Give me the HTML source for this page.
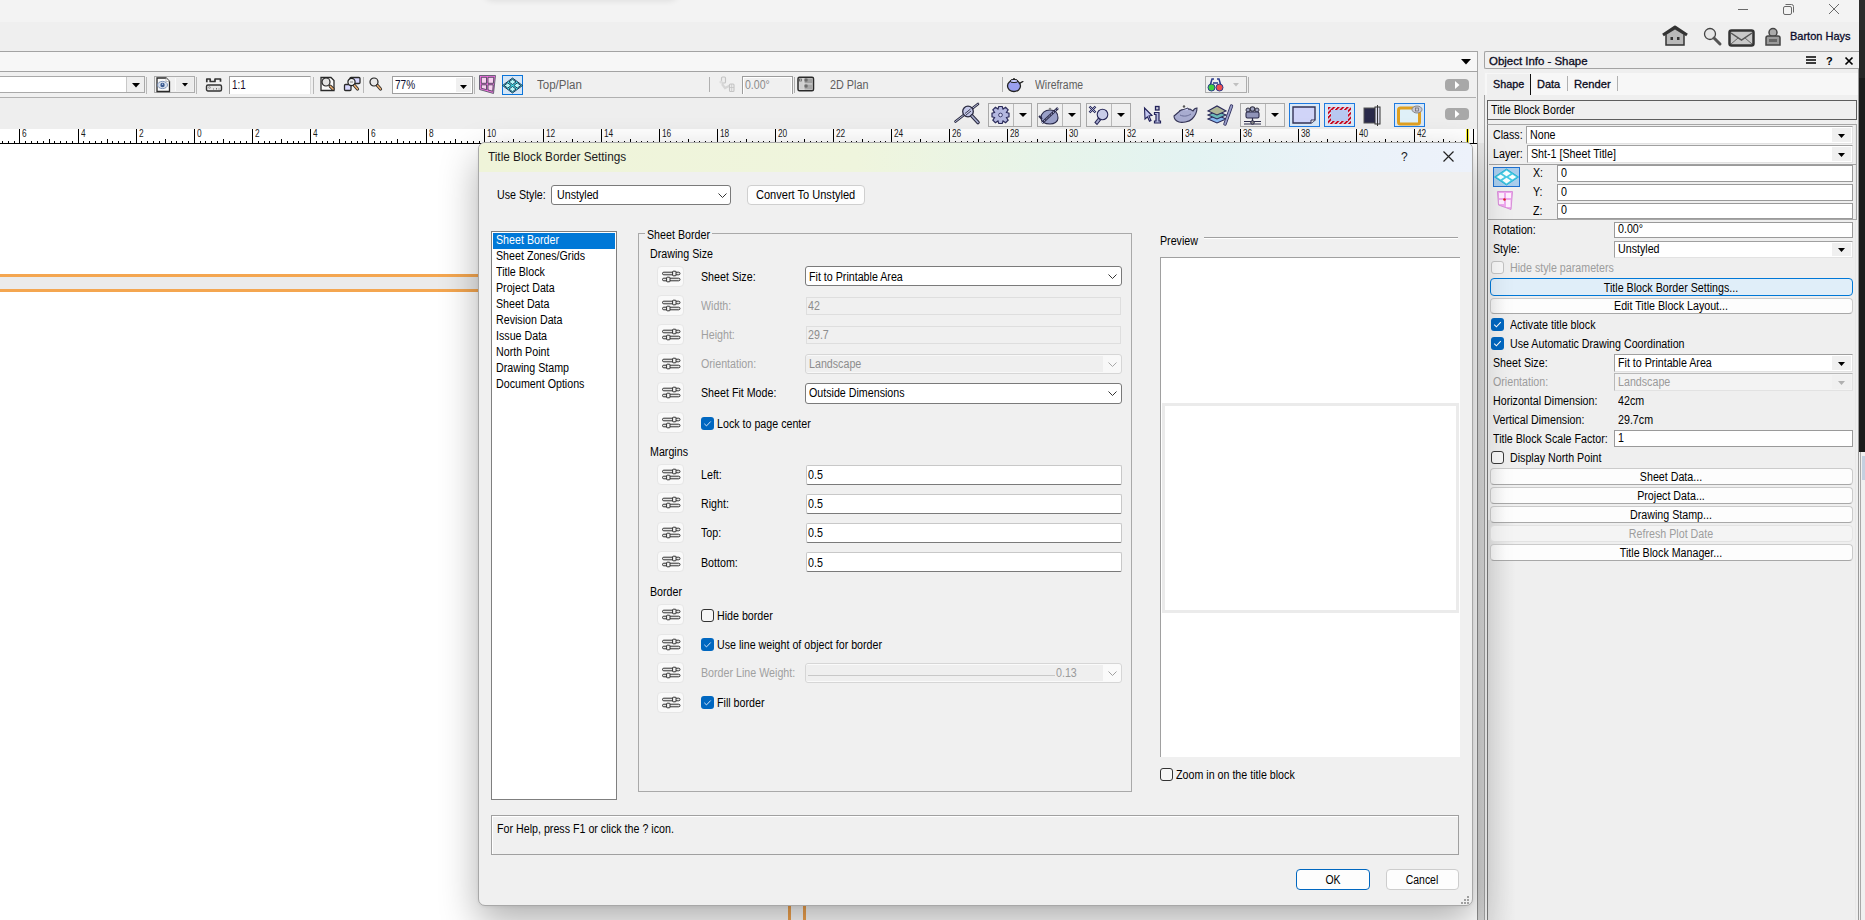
<!DOCTYPE html>
<html><head><meta charset="utf-8"><title>Title Block Border Settings</title>
<style>
html,body{margin:0;padding:0;}
body{width:1865px;height:920px;overflow:hidden;position:relative;background:#f0f0f0;font-family:"Liberation Sans",sans-serif;}
body div{position:absolute;box-sizing:border-box;}
.t{white-space:pre;}
svg{overflow:visible}
</style></head><body>
<div style="left:0px;top:0px;width:1865px;height:22px;background:#f3f3f3"></div>
<div style="left:0px;top:22px;width:1865px;height:29px;background:#efefef"></div>
<div style="left:482px;top:-30px;width:198px;height:30px;background:#f3f3f3;border-radius:0 0 12px 12px;box-shadow:0 1px 6px rgba(0,0,0,.09)"></div>
<div style="left:1738px;top:9px;width:10px;height:1px;background:#6a6a6a"></div>
<svg style="position:absolute;left:1782px;top:3px" width="14" height="14" viewBox="0 0 14 14"><rect x="1.5" y="3.5" width="8" height="8" rx="1.5" fill="none" stroke="#6a6a6a"/><path d="M3.5 1.5h6a2 2 0 0 1 2 2v6" fill="none" stroke="#6a6a6a"/></svg>
<svg style="position:absolute;left:1828px;top:3px" width="12" height="12" viewBox="0 0 12 12"><path d="M1 1L11 11M11 1L1 11" stroke="#6a6a6a" stroke-width="1"/></svg>
<div style="left:1859px;top:0px;width:6px;height:30px;background:#2c2c2c"></div>
<div style="left:1859px;top:30px;width:6px;height:48px;background:#262626"></div>
<div style="left:1859px;top:78px;width:6px;height:374px;background:#1b1b1b"></div>
<svg style="position:absolute;left:1661px;top:25px" width="28" height="22" viewBox="0 0 28 22"><path d="M2 10L14 2L26 10" fill="none" stroke="#333" stroke-width="3" stroke-linejoin="round"/><path d="M5 9L14 3.5L23 9V20H5Z" fill="#b9b9b9" stroke="#333" stroke-width="1.5"/><rect x="9.5" y="12" width="2.5" height="3" fill="#333"/><rect x="16" y="12" width="2.5" height="3" fill="#333"/></svg>
<svg style="position:absolute;left:1703px;top:27px" width="20" height="20" viewBox="0 0 20 20"><circle cx="7" cy="7" r="5.5" fill="#e6e6e6" stroke="#444" stroke-width="1.3"/><path d="M11 11L17 17" stroke="#555" stroke-width="3" stroke-linecap="round"/></svg>
<svg style="position:absolute;left:1728px;top:29px" width="28" height="19" viewBox="0 0 28 19"><rect x="1.5" y="1.5" width="24" height="15" rx="2" fill="#c8c8c8" stroke="#333" stroke-width="2.5"/><path d="M3 4L13.5 11L24 4" fill="none" stroke="#555" stroke-width="1.5"/><path d="M3 15L10 9M24 15L17 9" stroke="#666" stroke-width="1"/></svg>
<svg style="position:absolute;left:1764px;top:27px" width="18" height="20" viewBox="0 0 18 20"><circle cx="9" cy="5.5" r="4" fill="#aaa" stroke="#444" stroke-width="1.5"/><path d="M2 18V11a2 2 0 0 1 2-2h10a2 2 0 0 1 2 2v7Z" fill="#9a9a9a" stroke="#444" stroke-width="1.5"/><rect x="5" y="12" width="8" height="3" fill="#666"/></svg>
<div class="t" style="left:1790px;top:31px;font-size:11px;line-height:11px;color:#0a0a2a;transform:scaleX(1.0);transform-origin:0 0;-webkit-text-stroke:.3px #0a0a2a">Barton Hays</div>
<div style="left:0px;top:51px;width:1478px;height:1px;background:#a3a3a3"></div>
<div style="left:0px;top:52px;width:1477px;height:19px;background:#f7f7f7"></div>
<div style="left:1477px;top:51px;width:1px;height:92px;background:#a8a8a8"></div>
<svg style="position:absolute;left:1461px;top:59px" width="11" height="6" viewBox="0 0 11 6"><path d="M0 0H10L5 5.5Z" fill="#000"/></svg>
<div style="left:0px;top:71px;width:1478px;height:1px;background:#a3a3a3"></div>
<div style="left:0px;top:98px;width:1477px;height:31px;background:#eeeeee"></div>
<div style="left:0px;top:97px;width:1476px;height:1px;background:#b0b0b0"></div>
<div style="left:-2px;top:76px;width:147px;height:17px;background:#fff;border:1px solid #a9a9a9"></div>
<div style="left:126px;top:77px;width:18px;height:15px;background:#efefef;border-left:1px solid #c8c8c8"></div>
<svg style="position:absolute;left:132px;top:83px" width="8" height="5" viewBox="0 0 8 5"><path d="M0 0H8L4 4.5Z" fill="#000"/></svg>
<div style="left:146px;top:77px;width:1px;height:17px;background:#b8b8b8"></div>
<div style="left:154px;top:76px;width:41px;height:17px;background:#f0f0f0;border:1px solid #adadad"></div>
<div style="left:175px;top:78px;width:18px;height:13px;background:#ececec;border-left:1px solid #fafafa"></div>
<svg style="position:absolute;left:156px;top:77px" width="15" height="16" viewBox="0 0 15 16"><path d="M1 1H10L13.5 4.5V14.5H1Z" fill="#fafafa" stroke="#2a2a2a" stroke-width="1.3"/><path d="M10 1V4.5H13.5" fill="#fff" stroke="#999" stroke-width=".6"/><ellipse cx="6.5" cy="8" rx="5" ry="3.6" fill="#d8e0ec" stroke="#7088b0" stroke-width=".9"/><circle cx="6.5" cy="8" r="2.2" fill="#3a5a90"/><circle cx="6.5" cy="7.3" r=".7" fill="#c0d0f0"/></svg>
<svg style="position:absolute;left:182px;top:83px" width="6" height="4" viewBox="0 0 6 4"><path d="M0 0H6L3 3.5Z" fill="#000"/></svg>
<div style="left:196px;top:77px;width:1px;height:17px;background:#b8b8b8"></div>
<svg style="position:absolute;left:205px;top:77px" width="18" height="15" viewBox="0 0 18 15"><path d="M1.8 5.2V2H5.2V4.5H10V2H15.5V4.8" fill="none" stroke="#333" stroke-width="1.7" stroke-linejoin="round"/><rect x="1.5" y="8" width="15" height="6" rx="1.5" fill="#e6e6e6" stroke="#333" stroke-width="1.4"/><circle cx="4.5" cy="10.5" r=".9" fill="none" stroke="#888" stroke-width=".8"/><path d="M8.5 12.5v-1M11.5 12.5v-1.5M14 12.5v-1" stroke="#666" stroke-width=".9"/></svg>
<div style="left:229px;top:76px;width:82px;height:18px;background:#fff;border-left:1px solid #9c9c9c;border-top:1px solid #9c9c9c;border-right:1px solid #dadada"></div>
<div class="t" style="left:232px;top:79px;font-size:12px;line-height:12px;color:#1a0a2a;transform:scaleX(0.82);transform-origin:0 0;">1:1</div>
<div style="left:313px;top:77px;width:1px;height:17px;background:#b8b8b8"></div>
<svg style="position:absolute;left:319px;top:75px" width="20" height="18" viewBox="0 0 20 18"><path d="M2 2.5H12L15 5.5V15.5H2Z" fill="#fafafa" stroke="#2a2a2a" stroke-width="1.3"/><circle cx="7" cy="7" r="4" fill="#e4e4e4" stroke="#222" stroke-width="1.2"/><path d="M11.2 11.2L14 14" stroke="#2a2a2a" stroke-width="3.2" stroke-linecap="round"/><path d="M11.2 11.2L14 14" stroke="#f0b070" stroke-width="1.5" stroke-linecap="round"/></svg>
<svg style="position:absolute;left:342px;top:75px" width="20" height="18" viewBox="0 0 20 18"><rect x="2.5" y="9.5" width="6.5" height="6" rx="1" fill="#d8d8ff" stroke="#2a2a2a" stroke-width="1.3"/><rect x="8" y="2.5" width="10" height="6" rx="1" fill="#d8d8ff" stroke="#2a2a2a" stroke-width="1.3"/><circle cx="9.5" cy="7" r="3.6" fill="#eee" stroke="#222" stroke-width="1.2"/><path d="M8 7H11" stroke="#666" stroke-width=".8"/><path d="M12.5 10.5L15.5 14" stroke="#2a2a2a" stroke-width="3.2" stroke-linecap="round"/><path d="M12.5 10.5L15.5 14" stroke="#f0b070" stroke-width="1.5" stroke-linecap="round"/></svg>
<div style="left:363px;top:77px;width:1px;height:16px;background:#b8b8b8"></div>
<svg style="position:absolute;left:368px;top:75px" width="20" height="18" viewBox="0 0 20 18"><circle cx="6" cy="7" r="4" fill="#e8e8e8" stroke="#222" stroke-width="1.2"/><path d="M9.5 10.5L12.5 14" stroke="#2a2a2a" stroke-width="3.2" stroke-linecap="round"/><path d="M9.5 10.5L12.5 14" stroke="#f0b070" stroke-width="1.5" stroke-linecap="round"/></svg>
<div style="left:392px;top:76px;width:81px;height:18px;background:#fff;border:1px solid #a0a0a0"></div>
<div style="left:456px;top:78px;width:15px;height:14px;background:#f0f0f0"></div>
<svg style="position:absolute;left:460px;top:85px" width="7" height="4" viewBox="0 0 7 4"><path d="M0 0H7L3.5 4Z" fill="#000"/></svg>
<div class="t" style="left:395px;top:79px;font-size:12px;line-height:12px;color:#101030;transform:scaleX(0.84);transform-origin:0 0;">77%</div>
<div style="left:474px;top:77px;width:1px;height:17px;background:#b8b8b8"></div>
<svg style="position:absolute;left:478px;top:74px" width="19" height="21" viewBox="0 0 19 21"><path d="M1.5 1.5H17.5L15.5 19.5L1.5 15.5Z" fill="#f070e0" stroke="#5a5a6a" stroke-width=".9"/><path d="M3.3 3.3H8.5V9.3H3.3Z M10 3.3H15.8L15.4 9.3H10Z M3.3 10.8H8.5V15.6L3.3 14.3Z M10 10.8H15.2L14.7 17.2L10 16Z" fill="#f8d0f0" stroke="#3a3a4a" stroke-width=".8"/></svg>
<div style="left:502px;top:75px;width:21px;height:20px;background:#d4e6f7;border:1.5px solid #0a74da"></div>
<svg style="position:absolute;left:502px;top:77px" width="21" height="17" viewBox="0 0 21 17"><path d="M10.5 1L20.5 8.5L10.5 16L0.5 8.5Z" fill="#40eef0" stroke="#1a2a4a" stroke-width=".9"/><path d="M10.5 2.3L14.0 4.9L10.5 7.5L7.0 4.9Z" fill="#b8f8f8" stroke="#1a2a4a" stroke-width=".9"/><path d="M15.3 5.9L18.8 8.5L15.3 11.1L11.8 8.5Z" fill="#b8f8f8" stroke="#1a2a4a" stroke-width=".9"/><path d="M10.5 9.5L14.0 12.1L10.5 14.7L7.0 12.1Z" fill="#b8f8f8" stroke="#1a2a4a" stroke-width=".9"/><path d="M5.7 5.9L9.2 8.5L5.7 11.1L2.2 8.5Z" fill="#b8f8f8" stroke="#1a2a4a" stroke-width=".9"/></svg>
<div class="t" style="left:537px;top:79px;font-size:12px;line-height:12px;color:#5e5e5e;transform:scaleX(0.96);transform-origin:0 0;">Top/Plan</div>
<div style="left:709px;top:77px;width:1px;height:15px;background:#b0b0b0"></div>
<svg style="position:absolute;left:718px;top:76px" width="18" height="17" viewBox="0 0 18 17"><path d="M4 8L7 12L13 9" fill="none" stroke="#d6d6d6" stroke-width="2.2"/><rect x="3.5" y="1" width="4" height="6" rx="1" fill="#eee" stroke="#c4c4c4" stroke-width="1.1"/><rect x="11.5" y="8" width="4.5" height="7.5" rx="1" fill="#eee" stroke="#c4c4c4" stroke-width="1.1"/><path d="M11.5 11.5H16M13.7 8V15.5" stroke="#c4c4c4" stroke-width=".8"/><circle cx="3" cy="6" r="1.6" fill="#ddd"/></svg>
<div style="left:742px;top:76px;width:51px;height:18px;background:#f0f0f0;border-left:1px solid #9c9c9c;border-top:1px solid #9c9c9c;border-right:1px solid #9c9c9c;box-shadow:inset 1px 1px 0 #fff,inset -1px 0 0 #fff"></div>
<div class="t" style="left:745px;top:79px;font-size:12px;line-height:12px;color:#8a8a8a;transform:scaleX(0.88);transform-origin:0 0;">0.00°</div>
<div style="left:794px;top:77px;width:1px;height:16px;background:#b0b0b0"></div>
<svg style="position:absolute;left:797px;top:76px" width="18" height="16" viewBox="0 0 18 16"><rect x="1" y="1.2" width="15.5" height="13.5" rx="1.5" fill="#ddd" stroke="#2a2a2a" stroke-width="1.5"/><rect x="2.2" y="2.4" width="4.5" height="11" fill="#cfcfcf"/><rect x="7.5" y="2.4" width="8" height="5" fill="#a0a0a0"/><rect x="7.5" y="8.4" width="8" height="5.2" fill="#a8a8a8"/><rect x="2.5" y="3" width="2" height="2" fill="none" stroke="#555" stroke-width=".7"/><rect x="8" y="3" width="2" height="2" fill="none" stroke="#444" stroke-width=".7"/><rect x="8" y="9" width="2" height="2" fill="none" stroke="#444" stroke-width=".7"/></svg>
<div class="t" style="left:830px;top:79px;font-size:12px;line-height:12px;color:#5e5e5e;transform:scaleX(0.9);transform-origin:0 0;">2D Plan</div>
<div style="left:1002px;top:77px;width:1px;height:15px;background:#b0b0b0"></div>
<svg style="position:absolute;left:1006px;top:76px" width="18" height="17" viewBox="0 0 18 17"><ellipse cx="8" cy="10" rx="6.5" ry="5.5" fill="#9aa0f0" stroke="#222" stroke-width="1.3"/><path d="M13 8C15 6 17 6 17 5" fill="none" stroke="#222" stroke-width="1.3"/><ellipse cx="8" cy="5" rx="4" ry="1.6" fill="#c8ccff" stroke="#222"/><circle cx="8" cy="3" r="1" fill="#222"/></svg>
<div class="t" style="left:1035px;top:79px;font-size:12px;line-height:12px;color:#5e5e5e;transform:scaleX(0.87);transform-origin:0 0;">Wireframe</div>
<div style="left:1205px;top:76px;width:42px;height:17px;background:#f0f0f0;border:1px solid #adadad"></div>
<svg style="position:absolute;left:1207px;top:77px" width="17" height="15" viewBox="0 0 17 15"><path d="M3 9L5 2L7 2M14 9L12 2L10 2M6 6H11" fill="none" stroke="#2a3a8a" stroke-width="1.5"/><circle cx="4.5" cy="10.5" r="3.5" fill="#40d040" stroke="#2a3a8a"/><circle cx="12.5" cy="10.5" r="3.5" fill="#f05050" stroke="#2a3a8a"/></svg>
<svg style="position:absolute;left:1233px;top:83px" width="6" height="4" viewBox="0 0 6 4"><path d="M0 0H6L3 3.5Z" fill="#c0c0c0"/></svg>
<div style="left:1248px;top:77px;width:1px;height:16px;background:#b0b0b0"></div>
<div style="left:1445px;top:79px;width:24px;height:12px;background:#a8a8a8;border-radius:4px"></div>
<svg style="position:absolute;left:1455px;top:81px" width="5" height="8" viewBox="0 0 5 8"><path d="M0 0L4.5 4L0 8Z" fill="#fff"/></svg>
<svg style="position:absolute;left:954px;top:103px" width="28" height="24" viewBox="0 0 28 24"><path d="M1.5 18.5L24 1" stroke="#2a2a40" stroke-width="2.6" stroke-linecap="round"/><path d="M1.5 18.5L24 1" stroke="#b8bcd8" stroke-width="1" stroke-linecap="round"/><circle cx="14" cy="8.5" r="5.3" fill="#c4c8e8" stroke="#2a2a40" stroke-width="1.3"/><path d="M11 10.5L16.5 6M12 12L17 8" stroke="#2a2a40" stroke-width=".9"/><path d="M18 13L24 19.5" stroke="#2a2a40" stroke-width="3.6" stroke-linecap="round"/><path d="M18 13L24 19.5" stroke="#aab0d0" stroke-width="1.6" stroke-linecap="round"/></svg>
<div style="left:988px;top:103px;width:44px;height:24px;background:#f0f0f0;border:1px solid #a9a9a9"></div>
<div style="left:1013px;top:104px;width:1px;height:22px;background:#b9b9b9"></div>
<svg style="position:absolute;left:1019px;top:113px" width="8" height="4" viewBox="0 0 8 4"><path d="M0 0H8L4 4Z" fill="#000"/></svg>
<svg style="position:absolute;left:989px;top:104px" width="24" height="23" viewBox="0 0 24 23"><g transform="translate(11.5,11) scale(.85)"><path d="M-2-10h4l1 3 3-2 3 3-2 3 3 1v4l-3 1 2 3-3 3-3-2-1 3h-4l-1-3-3 2-3-3 2-3-3-1v-4l3-1-2-3 3-3 3 2z" fill="#b4b8e0" stroke="#2a2a5a" stroke-width="1.4"/><circle r="2.2" fill="#d8dcf8" stroke="#2a2a5a" stroke-width="1"/></g></svg>
<div style="left:1037px;top:103px;width:44px;height:24px;background:#f0f0f0;border:1px solid #a9a9a9"></div>
<div style="left:1062px;top:104px;width:1px;height:22px;background:#b9b9b9"></div>
<svg style="position:absolute;left:1068px;top:113px" width="8" height="4" viewBox="0 0 8 4"><path d="M0 0H8L4 4Z" fill="#000"/></svg>
<svg style="position:absolute;left:1038px;top:104px" width="24" height="23" viewBox="0 0 24 23"><path d="M3 14C3 9 7 6 12 6C17 6 20 9 20 14C20 18 16 20 12 20C7 20 3 18 3 14Z" fill="#9aa0c8" stroke="#2a2a4a" stroke-width="1.1"/><path d="M1 12L4 15" stroke="#2a2a4a" stroke-width="2"/><path d="M4 19L20 4" stroke="#2a2a4a" stroke-width="2.4"/><path d="M4 19L20 4" stroke="#c8ccf0" stroke-width="1" stroke-dasharray="1.5 1.5"/><circle cx="12" cy="5" r="1.3" fill="#888"/></svg>
<div style="left:1086px;top:103px;width:45px;height:24px;background:#f0f0f0;border:1px solid #a9a9a9"></div>
<div style="left:1111px;top:104px;width:1px;height:22px;background:#b9b9b9"></div>
<svg style="position:absolute;left:1117px;top:113px" width="8" height="4" viewBox="0 0 8 4"><path d="M0 0H8L4 4Z" fill="#000"/></svg>
<svg style="position:absolute;left:1087px;top:104px" width="24" height="23" viewBox="0 0 24 23"><circle cx="15.5" cy="10.5" r="5.3" fill="#c8cce8" stroke="#2a2a5a" stroke-width="1.1"/><path d="M11.5 14L8 18.5L10 20.5L13.5 16Z" fill="#a8acd0" stroke="#2a2a5a" stroke-width="1.1"/><path d="M2.5 2.5L8.5 8.5M8.5 2.5L2.5 8.5" stroke="#2a2a5a" stroke-width="2.4"/><path d="M2.5 2.5L8.5 8.5M8.5 2.5L2.5 8.5" stroke="#b0b4d8" stroke-width=".9"/></svg>
<svg style="position:absolute;left:1142px;top:104px" width="22" height="22" viewBox="0 0 22 22"><path d="M2.5 4L10 11.5L7 12L9 16.5L7.5 17.2L5.5 12.8L3 15Z" fill="#c4c8f0" stroke="#23235a" stroke-width="1.1"/><rect x="13.5" y="2.5" width="3.5" height="3.5" fill="#ccd" stroke="#23235a" stroke-width="1.3"/><path d="M12.5 8.5H17V17H18.5V19H12.5V17H14V10.5H12.5Z" fill="#b8bce0" stroke="#23235a" stroke-width="1.2"/></svg>
<svg style="position:absolute;left:1172px;top:103px" width="27" height="22" viewBox="0 0 27 22"><path d="M2 13L9 7L18 6L21 8C22 6 24 5 25 5C25 9 23 13 20 16C17 19 10 20 7 19C4 18 2 16 2 13Z" fill="#a8acd0" stroke="#333355" stroke-width="1.1"/><path d="M7 8L16 5L17 7" fill="#c8ccf0" stroke="#333355" stroke-width=".9"/><circle cx="12" cy="3.5" r="1.2" fill="#555"/><path d="M8 12C12 14 16 13 19 11" fill="none" stroke="#6a6e98" stroke-width="1"/></svg>
<svg style="position:absolute;left:1206px;top:103px" width="28" height="24" viewBox="0 0 28 24"><path d="M2 16L11 12L20 16L11 20Z" fill="#88b8f0" stroke="#2a2a5a" stroke-width="1.1"/><path d="M2 12L11 8L20 12L11 16Z" fill="#68b8b8" stroke="#2a2a5a" stroke-width="1.1"/><path d="M2 8L11 3L20 8L11 12Z" fill="#b0b898" stroke="#2a2a5a" stroke-width="1.1"/><path d="M19 21L25.5 3" stroke="#2a2a5a" stroke-width="3.4" stroke-linecap="round"/><path d="M19 21L25.5 3" stroke="#9a9ec8" stroke-width="1.8" stroke-linecap="round"/></svg>
<div style="left:1240px;top:103px;width:45px;height:24px;background:#f0f0f0;border:1px solid #a9a9a9"></div>
<div style="left:1265px;top:104px;width:1px;height:22px;background:#b9b9b9"></div>
<svg style="position:absolute;left:1271px;top:113px" width="8" height="4" viewBox="0 0 8 4"><path d="M0 0H8L4 4Z" fill="#000"/></svg>
<svg style="position:absolute;left:1241px;top:104px" width="24" height="23" viewBox="0 0 24 23"><circle cx="11.5" cy="5" r="2.3" fill="#a0a4c0" stroke="#334" stroke-width="1.1"/><circle cx="7" cy="6" r="2" fill="#a0a4c0" stroke="#334"/><circle cx="16" cy="6" r="2" fill="#a0a4c0" stroke="#334"/><rect x="5" y="8" width="13" height="6" rx="1.5" fill="#9094b8" stroke="#2a2a4a" stroke-width="1.1"/><path d="M11.5 14V18M3 17.5H20M3 20H20" stroke="#2a2a4a" stroke-width="1.2"/><circle cx="11.5" cy="18.5" r="1.8" fill="#888" stroke="#2a2a4a"/></svg>
<div style="left:1289px;top:103px;width:31px;height:24px;background:#d8e8f8;border:1px solid #1e7ae0"></div>
<svg style="position:absolute;left:1291px;top:105px" width="27" height="20" viewBox="0 0 27 20"><path d="M2 2H24V15L20 18H2Z" fill="#d0d4f8" stroke="#333355" stroke-width="1.4"/><path d="M20 18V15H24" fill="#fff" stroke="#333355"/></svg>
<div style="left:1324px;top:103px;width:31px;height:24px;background:#d8e8f8;border:1px solid #1e7ae0"></div>
<svg style="position:absolute;left:1326px;top:105px" width="27" height="20" viewBox="0 0 27 20"><defs><pattern id="hp" width="3.2" height="3.2" patternUnits="userSpaceOnUse" patternTransform="rotate(45)"><rect width="1.8" height="3.2" fill="#c8001a"/></pattern></defs><rect x="2" y="2" width="23" height="17" fill="url(#hp)"/><rect x="5" y="5" width="17" height="11" fill="#b8c8f0"/></svg>
<svg style="position:absolute;left:1363px;top:104px" width="20" height="22" viewBox="0 0 20 22"><rect x="1" y="4" width="12" height="15" fill="#2a2a4a" stroke="#555" stroke-width="1"/><rect x="12" y="3" width="5" height="17" fill="#dde" stroke="#333"/><path d="M14.5 1V22" stroke="#333" stroke-width="1"/></svg>
<div style="left:1394px;top:103px;width:31px;height:24px;background:#d8e8f8;border:1px solid #1e7ae0"></div>
<svg style="position:absolute;left:1396px;top:105px" width="27" height="21" viewBox="0 0 27 21"><rect x="2.5" y="3" width="21" height="16" rx="2" fill="#dff0f8" stroke="#e0a020" stroke-width="3"/><ellipse cx="21" cy="4.5" rx="5" ry="3.5" fill="#c8c8d8" stroke="#888"/><rect x="19.5" y="3" width="3" height="3" fill="none" stroke="#666" stroke-width=".7"/></svg>
<div style="left:1445px;top:108px;width:24px;height:12px;background:#a8a8a8;border-radius:4px"></div>
<svg style="position:absolute;left:1455px;top:110px" width="5" height="8" viewBox="0 0 5 8"><path d="M0 0L4.5 4L0 8Z" fill="#fff"/></svg>
<div style="left:0px;top:129px;width:1477px;height:14px;background:#fff"></div>
<div style="left:0px;top:143px;width:1477px;height:1px;background:#000"></div>
<div class="t" style="left:22px;top:129px;font-size:10px;line-height:10px;color:#1a1a1a;transform:scaleX(0.83);transform-origin:0 0;">6</div>
<div class="t" style="left:81px;top:129px;font-size:10px;line-height:10px;color:#1a1a1a;transform:scaleX(0.83);transform-origin:0 0;">4</div>
<div class="t" style="left:139px;top:129px;font-size:10px;line-height:10px;color:#1a1a1a;transform:scaleX(0.83);transform-origin:0 0;">2</div>
<div class="t" style="left:197px;top:129px;font-size:10px;line-height:10px;color:#1a1a1a;transform:scaleX(0.83);transform-origin:0 0;">0</div>
<div class="t" style="left:255px;top:129px;font-size:10px;line-height:10px;color:#1a1a1a;transform:scaleX(0.83);transform-origin:0 0;">2</div>
<div class="t" style="left:313px;top:129px;font-size:10px;line-height:10px;color:#1a1a1a;transform:scaleX(0.83);transform-origin:0 0;">4</div>
<div class="t" style="left:371px;top:129px;font-size:10px;line-height:10px;color:#1a1a1a;transform:scaleX(0.83);transform-origin:0 0;">6</div>
<div class="t" style="left:429px;top:129px;font-size:10px;line-height:10px;color:#1a1a1a;transform:scaleX(0.83);transform-origin:0 0;">8</div>
<div class="t" style="left:487px;top:129px;font-size:10px;line-height:10px;color:#1a1a1a;transform:scaleX(0.83);transform-origin:0 0;">10</div>
<div class="t" style="left:546px;top:129px;font-size:10px;line-height:10px;color:#1a1a1a;transform:scaleX(0.83);transform-origin:0 0;">12</div>
<div class="t" style="left:604px;top:129px;font-size:10px;line-height:10px;color:#1a1a1a;transform:scaleX(0.83);transform-origin:0 0;">14</div>
<div class="t" style="left:662px;top:129px;font-size:10px;line-height:10px;color:#1a1a1a;transform:scaleX(0.83);transform-origin:0 0;">16</div>
<div class="t" style="left:720px;top:129px;font-size:10px;line-height:10px;color:#1a1a1a;transform:scaleX(0.83);transform-origin:0 0;">18</div>
<div class="t" style="left:778px;top:129px;font-size:10px;line-height:10px;color:#1a1a1a;transform:scaleX(0.83);transform-origin:0 0;">20</div>
<div class="t" style="left:836px;top:129px;font-size:10px;line-height:10px;color:#1a1a1a;transform:scaleX(0.83);transform-origin:0 0;">22</div>
<div class="t" style="left:894px;top:129px;font-size:10px;line-height:10px;color:#1a1a1a;transform:scaleX(0.83);transform-origin:0 0;">24</div>
<div class="t" style="left:952px;top:129px;font-size:10px;line-height:10px;color:#1a1a1a;transform:scaleX(0.83);transform-origin:0 0;">26</div>
<div class="t" style="left:1010px;top:129px;font-size:10px;line-height:10px;color:#1a1a1a;transform:scaleX(0.83);transform-origin:0 0;">28</div>
<div class="t" style="left:1069px;top:129px;font-size:10px;line-height:10px;color:#1a1a1a;transform:scaleX(0.83);transform-origin:0 0;">30</div>
<div class="t" style="left:1127px;top:129px;font-size:10px;line-height:10px;color:#1a1a1a;transform:scaleX(0.83);transform-origin:0 0;">32</div>
<div class="t" style="left:1185px;top:129px;font-size:10px;line-height:10px;color:#1a1a1a;transform:scaleX(0.83);transform-origin:0 0;">34</div>
<div class="t" style="left:1243px;top:129px;font-size:10px;line-height:10px;color:#1a1a1a;transform:scaleX(0.83);transform-origin:0 0;">36</div>
<div class="t" style="left:1301px;top:129px;font-size:10px;line-height:10px;color:#1a1a1a;transform:scaleX(0.83);transform-origin:0 0;">38</div>
<div class="t" style="left:1359px;top:129px;font-size:10px;line-height:10px;color:#1a1a1a;transform:scaleX(0.83);transform-origin:0 0;">40</div>
<div class="t" style="left:1417px;top:129px;font-size:10px;line-height:10px;color:#1a1a1a;transform:scaleX(0.83);transform-origin:0 0;">42</div>
<svg style="position:absolute;left:0px;top:129px" width="1477" height="15" viewBox="0 0 1477 15"><rect x="2" y="12" width="1" height="2" fill="#000"/><rect x="8" y="12" width="1" height="2" fill="#000"/><rect x="14" y="12" width="1" height="2" fill="#000"/><rect x="19" y="0" width="1" height="14" fill="#000"/><rect x="25" y="12" width="1" height="2" fill="#000"/><rect x="31" y="12" width="1" height="2" fill="#000"/><rect x="37" y="12" width="1" height="2" fill="#000"/><rect x="43" y="12" width="1" height="2" fill="#000"/><rect x="49" y="10" width="1" height="4" fill="#000"/><rect x="54" y="12" width="1" height="2" fill="#000"/><rect x="60" y="12" width="1" height="2" fill="#000"/><rect x="66" y="12" width="1" height="2" fill="#000"/><rect x="72" y="12" width="1" height="2" fill="#000"/><rect x="78" y="0" width="1" height="14" fill="#000"/><rect x="83" y="12" width="1" height="2" fill="#000"/><rect x="89" y="12" width="1" height="2" fill="#000"/><rect x="95" y="12" width="1" height="2" fill="#000"/><rect x="101" y="12" width="1" height="2" fill="#000"/><rect x="107" y="10" width="1" height="4" fill="#000"/><rect x="112" y="12" width="1" height="2" fill="#000"/><rect x="118" y="12" width="1" height="2" fill="#000"/><rect x="124" y="12" width="1" height="2" fill="#000"/><rect x="130" y="12" width="1" height="2" fill="#000"/><rect x="136" y="0" width="1" height="14" fill="#000"/><rect x="141" y="12" width="1" height="2" fill="#000"/><rect x="147" y="12" width="1" height="2" fill="#000"/><rect x="153" y="12" width="1" height="2" fill="#000"/><rect x="159" y="12" width="1" height="2" fill="#000"/><rect x="165" y="10" width="1" height="4" fill="#000"/><rect x="171" y="12" width="1" height="2" fill="#000"/><rect x="176" y="12" width="1" height="2" fill="#000"/><rect x="182" y="12" width="1" height="2" fill="#000"/><rect x="188" y="12" width="1" height="2" fill="#000"/><rect x="194" y="0" width="1" height="14" fill="#000"/><rect x="200" y="12" width="1" height="2" fill="#000"/><rect x="205" y="12" width="1" height="2" fill="#000"/><rect x="211" y="12" width="1" height="2" fill="#000"/><rect x="217" y="12" width="1" height="2" fill="#000"/><rect x="223" y="10" width="1" height="4" fill="#000"/><rect x="229" y="12" width="1" height="2" fill="#000"/><rect x="234" y="12" width="1" height="2" fill="#000"/><rect x="240" y="12" width="1" height="2" fill="#000"/><rect x="246" y="12" width="1" height="2" fill="#000"/><rect x="252" y="0" width="1" height="14" fill="#000"/><rect x="258" y="12" width="1" height="2" fill="#000"/><rect x="264" y="12" width="1" height="2" fill="#000"/><rect x="269" y="12" width="1" height="2" fill="#000"/><rect x="275" y="12" width="1" height="2" fill="#000"/><rect x="281" y="10" width="1" height="4" fill="#000"/><rect x="287" y="12" width="1" height="2" fill="#000"/><rect x="293" y="12" width="1" height="2" fill="#000"/><rect x="298" y="12" width="1" height="2" fill="#000"/><rect x="304" y="12" width="1" height="2" fill="#000"/><rect x="310" y="0" width="1" height="14" fill="#000"/><rect x="316" y="12" width="1" height="2" fill="#000"/><rect x="322" y="12" width="1" height="2" fill="#000"/><rect x="327" y="12" width="1" height="2" fill="#000"/><rect x="333" y="12" width="1" height="2" fill="#000"/><rect x="339" y="10" width="1" height="4" fill="#000"/><rect x="345" y="12" width="1" height="2" fill="#000"/><rect x="351" y="12" width="1" height="2" fill="#000"/><rect x="357" y="12" width="1" height="2" fill="#000"/><rect x="362" y="12" width="1" height="2" fill="#000"/><rect x="368" y="0" width="1" height="14" fill="#000"/><rect x="374" y="12" width="1" height="2" fill="#000"/><rect x="380" y="12" width="1" height="2" fill="#000"/><rect x="386" y="12" width="1" height="2" fill="#000"/><rect x="391" y="12" width="1" height="2" fill="#000"/><rect x="397" y="10" width="1" height="4" fill="#000"/><rect x="403" y="12" width="1" height="2" fill="#000"/><rect x="409" y="12" width="1" height="2" fill="#000"/><rect x="415" y="12" width="1" height="2" fill="#000"/><rect x="420" y="12" width="1" height="2" fill="#000"/><rect x="426" y="0" width="1" height="14" fill="#000"/><rect x="432" y="12" width="1" height="2" fill="#000"/><rect x="438" y="12" width="1" height="2" fill="#000"/><rect x="444" y="12" width="1" height="2" fill="#000"/><rect x="450" y="12" width="1" height="2" fill="#000"/><rect x="455" y="10" width="1" height="4" fill="#000"/><rect x="461" y="12" width="1" height="2" fill="#000"/><rect x="467" y="12" width="1" height="2" fill="#000"/><rect x="473" y="12" width="1" height="2" fill="#000"/><rect x="479" y="12" width="1" height="2" fill="#000"/><rect x="484" y="0" width="1" height="14" fill="#000"/><rect x="490" y="12" width="1" height="2" fill="#000"/><rect x="496" y="12" width="1" height="2" fill="#000"/><rect x="502" y="12" width="1" height="2" fill="#000"/><rect x="508" y="12" width="1" height="2" fill="#000"/><rect x="513" y="10" width="1" height="4" fill="#000"/><rect x="519" y="12" width="1" height="2" fill="#000"/><rect x="525" y="12" width="1" height="2" fill="#000"/><rect x="531" y="12" width="1" height="2" fill="#000"/><rect x="537" y="12" width="1" height="2" fill="#000"/><rect x="543" y="0" width="1" height="14" fill="#000"/><rect x="548" y="12" width="1" height="2" fill="#000"/><rect x="554" y="12" width="1" height="2" fill="#000"/><rect x="560" y="12" width="1" height="2" fill="#000"/><rect x="566" y="12" width="1" height="2" fill="#000"/><rect x="572" y="10" width="1" height="4" fill="#000"/><rect x="577" y="12" width="1" height="2" fill="#000"/><rect x="583" y="12" width="1" height="2" fill="#000"/><rect x="589" y="12" width="1" height="2" fill="#000"/><rect x="595" y="12" width="1" height="2" fill="#000"/><rect x="601" y="0" width="1" height="14" fill="#000"/><rect x="606" y="12" width="1" height="2" fill="#000"/><rect x="612" y="12" width="1" height="2" fill="#000"/><rect x="618" y="12" width="1" height="2" fill="#000"/><rect x="624" y="12" width="1" height="2" fill="#000"/><rect x="630" y="10" width="1" height="4" fill="#000"/><rect x="636" y="12" width="1" height="2" fill="#000"/><rect x="641" y="12" width="1" height="2" fill="#000"/><rect x="647" y="12" width="1" height="2" fill="#000"/><rect x="653" y="12" width="1" height="2" fill="#000"/><rect x="659" y="0" width="1" height="14" fill="#000"/><rect x="665" y="12" width="1" height="2" fill="#000"/><rect x="670" y="12" width="1" height="2" fill="#000"/><rect x="676" y="12" width="1" height="2" fill="#000"/><rect x="682" y="12" width="1" height="2" fill="#000"/><rect x="688" y="10" width="1" height="4" fill="#000"/><rect x="694" y="12" width="1" height="2" fill="#000"/><rect x="699" y="12" width="1" height="2" fill="#000"/><rect x="705" y="12" width="1" height="2" fill="#000"/><rect x="711" y="12" width="1" height="2" fill="#000"/><rect x="717" y="0" width="1" height="14" fill="#000"/><rect x="723" y="12" width="1" height="2" fill="#000"/><rect x="729" y="12" width="1" height="2" fill="#000"/><rect x="734" y="12" width="1" height="2" fill="#000"/><rect x="740" y="12" width="1" height="2" fill="#000"/><rect x="746" y="10" width="1" height="4" fill="#000"/><rect x="752" y="12" width="1" height="2" fill="#000"/><rect x="758" y="12" width="1" height="2" fill="#000"/><rect x="763" y="12" width="1" height="2" fill="#000"/><rect x="769" y="12" width="1" height="2" fill="#000"/><rect x="775" y="0" width="1" height="14" fill="#000"/><rect x="781" y="12" width="1" height="2" fill="#000"/><rect x="787" y="12" width="1" height="2" fill="#000"/><rect x="792" y="12" width="1" height="2" fill="#000"/><rect x="798" y="12" width="1" height="2" fill="#000"/><rect x="804" y="10" width="1" height="4" fill="#000"/><rect x="810" y="12" width="1" height="2" fill="#000"/><rect x="816" y="12" width="1" height="2" fill="#000"/><rect x="821" y="12" width="1" height="2" fill="#000"/><rect x="827" y="12" width="1" height="2" fill="#000"/><rect x="833" y="0" width="1" height="14" fill="#000"/><rect x="839" y="12" width="1" height="2" fill="#000"/><rect x="845" y="12" width="1" height="2" fill="#000"/><rect x="851" y="12" width="1" height="2" fill="#000"/><rect x="856" y="12" width="1" height="2" fill="#000"/><rect x="862" y="10" width="1" height="4" fill="#000"/><rect x="868" y="12" width="1" height="2" fill="#000"/><rect x="874" y="12" width="1" height="2" fill="#000"/><rect x="880" y="12" width="1" height="2" fill="#000"/><rect x="885" y="12" width="1" height="2" fill="#000"/><rect x="891" y="0" width="1" height="14" fill="#000"/><rect x="897" y="12" width="1" height="2" fill="#000"/><rect x="903" y="12" width="1" height="2" fill="#000"/><rect x="909" y="12" width="1" height="2" fill="#000"/><rect x="914" y="12" width="1" height="2" fill="#000"/><rect x="920" y="10" width="1" height="4" fill="#000"/><rect x="926" y="12" width="1" height="2" fill="#000"/><rect x="932" y="12" width="1" height="2" fill="#000"/><rect x="938" y="12" width="1" height="2" fill="#000"/><rect x="944" y="12" width="1" height="2" fill="#000"/><rect x="949" y="0" width="1" height="14" fill="#000"/><rect x="955" y="12" width="1" height="2" fill="#000"/><rect x="961" y="12" width="1" height="2" fill="#000"/><rect x="967" y="12" width="1" height="2" fill="#000"/><rect x="973" y="12" width="1" height="2" fill="#000"/><rect x="978" y="10" width="1" height="4" fill="#000"/><rect x="984" y="12" width="1" height="2" fill="#000"/><rect x="990" y="12" width="1" height="2" fill="#000"/><rect x="996" y="12" width="1" height="2" fill="#000"/><rect x="1002" y="12" width="1" height="2" fill="#000"/><rect x="1007" y="0" width="1" height="14" fill="#000"/><rect x="1013" y="12" width="1" height="2" fill="#000"/><rect x="1019" y="12" width="1" height="2" fill="#000"/><rect x="1025" y="12" width="1" height="2" fill="#000"/><rect x="1031" y="12" width="1" height="2" fill="#000"/><rect x="1037" y="10" width="1" height="4" fill="#000"/><rect x="1042" y="12" width="1" height="2" fill="#000"/><rect x="1048" y="12" width="1" height="2" fill="#000"/><rect x="1054" y="12" width="1" height="2" fill="#000"/><rect x="1060" y="12" width="1" height="2" fill="#000"/><rect x="1066" y="0" width="1" height="14" fill="#000"/><rect x="1071" y="12" width="1" height="2" fill="#000"/><rect x="1077" y="12" width="1" height="2" fill="#000"/><rect x="1083" y="12" width="1" height="2" fill="#000"/><rect x="1089" y="12" width="1" height="2" fill="#000"/><rect x="1095" y="10" width="1" height="4" fill="#000"/><rect x="1100" y="12" width="1" height="2" fill="#000"/><rect x="1106" y="12" width="1" height="2" fill="#000"/><rect x="1112" y="12" width="1" height="2" fill="#000"/><rect x="1118" y="12" width="1" height="2" fill="#000"/><rect x="1124" y="0" width="1" height="14" fill="#000"/><rect x="1130" y="12" width="1" height="2" fill="#000"/><rect x="1135" y="12" width="1" height="2" fill="#000"/><rect x="1141" y="12" width="1" height="2" fill="#000"/><rect x="1147" y="12" width="1" height="2" fill="#000"/><rect x="1153" y="10" width="1" height="4" fill="#000"/><rect x="1159" y="12" width="1" height="2" fill="#000"/><rect x="1164" y="12" width="1" height="2" fill="#000"/><rect x="1170" y="12" width="1" height="2" fill="#000"/><rect x="1176" y="12" width="1" height="2" fill="#000"/><rect x="1182" y="0" width="1" height="14" fill="#000"/><rect x="1188" y="12" width="1" height="2" fill="#000"/><rect x="1193" y="12" width="1" height="2" fill="#000"/><rect x="1199" y="12" width="1" height="2" fill="#000"/><rect x="1205" y="12" width="1" height="2" fill="#000"/><rect x="1211" y="10" width="1" height="4" fill="#000"/><rect x="1217" y="12" width="1" height="2" fill="#000"/><rect x="1223" y="12" width="1" height="2" fill="#000"/><rect x="1228" y="12" width="1" height="2" fill="#000"/><rect x="1234" y="12" width="1" height="2" fill="#000"/><rect x="1240" y="0" width="1" height="14" fill="#000"/><rect x="1246" y="12" width="1" height="2" fill="#000"/><rect x="1252" y="12" width="1" height="2" fill="#000"/><rect x="1257" y="12" width="1" height="2" fill="#000"/><rect x="1263" y="12" width="1" height="2" fill="#000"/><rect x="1269" y="10" width="1" height="4" fill="#000"/><rect x="1275" y="12" width="1" height="2" fill="#000"/><rect x="1281" y="12" width="1" height="2" fill="#000"/><rect x="1286" y="12" width="1" height="2" fill="#000"/><rect x="1292" y="12" width="1" height="2" fill="#000"/><rect x="1298" y="0" width="1" height="14" fill="#000"/><rect x="1304" y="12" width="1" height="2" fill="#000"/><rect x="1310" y="12" width="1" height="2" fill="#000"/><rect x="1316" y="12" width="1" height="2" fill="#000"/><rect x="1321" y="12" width="1" height="2" fill="#000"/><rect x="1327" y="10" width="1" height="4" fill="#000"/><rect x="1333" y="12" width="1" height="2" fill="#000"/><rect x="1339" y="12" width="1" height="2" fill="#000"/><rect x="1345" y="12" width="1" height="2" fill="#000"/><rect x="1350" y="12" width="1" height="2" fill="#000"/><rect x="1356" y="0" width="1" height="14" fill="#000"/><rect x="1362" y="12" width="1" height="2" fill="#000"/><rect x="1368" y="12" width="1" height="2" fill="#000"/><rect x="1374" y="12" width="1" height="2" fill="#000"/><rect x="1379" y="12" width="1" height="2" fill="#000"/><rect x="1385" y="10" width="1" height="4" fill="#000"/><rect x="1391" y="12" width="1" height="2" fill="#000"/><rect x="1397" y="12" width="1" height="2" fill="#000"/><rect x="1403" y="12" width="1" height="2" fill="#000"/><rect x="1409" y="12" width="1" height="2" fill="#000"/><rect x="1414" y="0" width="1" height="14" fill="#000"/><rect x="1420" y="12" width="1" height="2" fill="#000"/><rect x="1426" y="12" width="1" height="2" fill="#000"/><rect x="1432" y="12" width="1" height="2" fill="#000"/><rect x="1438" y="12" width="1" height="2" fill="#000"/><rect x="1443" y="10" width="1" height="4" fill="#000"/><rect x="1449" y="12" width="1" height="2" fill="#000"/><rect x="1455" y="12" width="1" height="2" fill="#000"/><rect x="1461" y="12" width="1" height="2" fill="#000"/></svg>
<div style="left:1466px;top:129px;width:3px;height:14px;background:#f8f030"></div>
<div style="left:1467px;top:129px;width:1px;height:14px;background:#000"></div>
<div style="left:1473px;top:129px;width:1px;height:14px;background:#000"></div>
<div style="left:1473px;top:143px;width:3px;height:1px;background:#000"></div>
<div style="left:0px;top:144px;width:1477px;height:776px;background:#fff"></div>
<div style="left:0px;top:274px;width:479px;height:3px;background:#f4a650"></div>
<div style="left:0px;top:277px;width:479px;height:12px;background:#ebebeb"></div>
<div style="left:0px;top:289px;width:479px;height:3px;background:#f4a650"></div>
<div style="left:788px;top:900px;width:3px;height:20px;background:#f4a650"></div>
<div style="left:803px;top:900px;width:3px;height:20px;background:#f4a650"></div>
<div style="left:1478px;top:51px;width:6px;height:92px;background:#efefef"></div>
<div style="left:1478px;top:143px;width:6px;height:777px;background:linear-gradient(#e6e6e6,#dadada 40%,#d0d0d0)"></div>
<div style="left:1477px;top:143px;width:1px;height:777px;background:#8c8c8c"></div>
<div style="left:1484px;top:95px;width:1px;height:825px;background:#a0a0a0"></div>
<div style="left:1487px;top:120px;width:1px;height:800px;background:#7a7a7a"></div>
<div style="left:1488px;top:51px;width:371px;height:869px;background:#efefef"></div>
<div style="left:1488px;top:520px;width:28px;height:400px;background:linear-gradient(90deg,rgba(0,0,0,.07),rgba(0,0,0,0))"></div>
<div style="left:1855px;top:120px;width:1px;height:800px;background:#e8e8e8"></div>
<div style="left:1858px;top:51px;width:1px;height:869px;background:#9a9a9a"></div>
<div style="left:1859px;top:452px;width:6px;height:468px;background:#f0f0f0"></div>
<div style="left:1860px;top:452px;width:1px;height:468px;background:#a8a8a8"></div>
<div style="left:1862px;top:456px;width:3px;height:24px;background:#c4d0e0"></div>
<div style="left:1484px;top:51px;width:375px;height:18px;background:#f0f0f0;border:1px solid #a3a3a3;border-right:none;border-radius:2px 0 0 2px"></div>
<div class="t" style="left:1489px;top:56px;font-size:11px;line-height:11px;color:#0a0a20;transform:scaleX(1.04);transform-origin:0 0;-webkit-text-stroke:.3px #0a0a20">Object Info - Shape</div>
<svg style="position:absolute;left:1806px;top:56px" width="11" height="9" viewBox="0 0 11 9"><path d="M0 1H10M0 4H10M0 7H10" stroke="#000" stroke-width="1.6"/></svg>
<div class="t" style="left:1826px;top:56px;font-size:11px;line-height:11px;color:#000;transform:scaleX(1.0);transform-origin:0 0;font-weight:bold">?</div>
<svg style="position:absolute;left:1845px;top:57px" width="8" height="8" viewBox="0 0 8 8"><path d="M0.5 0.5L7.5 7.5M7.5 0.5L0.5 7.5" stroke="#000" stroke-width="1.7"/></svg>
<div style="left:1485px;top:73px;width:373px;height:22px;background:#f7f7f7"></div>
<div style="left:1487px;top:74px;width:43px;height:21px;background:#efefef"></div>
<div style="left:1530px;top:74px;width:1px;height:21px;background:#111"></div>
<div style="left:1567px;top:76px;width:1px;height:15px;background:#b0b0b0"></div>
<div style="left:1617px;top:76px;width:1px;height:15px;background:#b0b0b0"></div>
<div class="t" style="left:1493px;top:79px;font-size:11px;line-height:11px;color:#0a0a20;transform:scaleX(0.98);transform-origin:0 0;-webkit-text-stroke:.3px #0a0a20">Shape</div>
<div class="t" style="left:1537px;top:79px;font-size:11px;line-height:11px;color:#0a0a20;transform:scaleX(1.0);transform-origin:0 0;-webkit-text-stroke:.3px #0a0a20">Data</div>
<div class="t" style="left:1574px;top:79px;font-size:11px;line-height:11px;color:#0a0a20;transform:scaleX(1.02);transform-origin:0 0;-webkit-text-stroke:.3px #0a0a20">Render</div>
<div style="left:1487px;top:100px;width:370px;height:20px;background:#f0f0f0;border:1px solid #5e5e5e"></div>
<div class="t" style="left:1491px;top:104px;font-size:12px;line-height:12px;color:#000;transform:scaleX(0.89);transform-origin:0 0;">Title Block Border</div>
<div style="left:1487px;top:124px;width:370px;height:96px;border:1px solid #a6a6a6;border-left:1px solid #7a7a7a"></div>
<div class="t" style="left:1493px;top:129px;font-size:12px;line-height:12px;color:#000;transform:scaleX(0.89);transform-origin:0 0;">Class:</div>
<div style="left:1526px;top:126px;width:327px;height:18px;background:#fff;border-left:1px solid #a0a0a0;border-top:1px solid #a0a0a0;border-right:1px solid #e2e2e2;border-bottom:1px solid #e2e2e2"></div>
<div style="left:1832px;top:128px;width:19px;height:14px;background:#f0f0f0"></div>
<svg style="position:absolute;left:1838px;top:134px" width="7" height="4" viewBox="0 0 7 4"><path d="M0 0H7L3.5 4Z" fill="#000"/></svg>
<div class="t" style="left:1530px;top:129px;font-size:12px;line-height:12px;color:#000;transform:scaleX(0.89);transform-origin:0 0;">None</div>
<div class="t" style="left:1493px;top:148px;font-size:12px;line-height:12px;color:#000;transform:scaleX(0.89);transform-origin:0 0;">Layer:</div>
<div style="left:1527px;top:145px;width:326px;height:18px;background:#fff;border-left:1px solid #a0a0a0;border-top:1px solid #a0a0a0;border-right:1px solid #e2e2e2;border-bottom:1px solid #e2e2e2"></div>
<div style="left:1832px;top:147px;width:19px;height:14px;background:#f0f0f0"></div>
<svg style="position:absolute;left:1838px;top:153px" width="7" height="4" viewBox="0 0 7 4"><path d="M0 0H7L3.5 4Z" fill="#000"/></svg>
<div class="t" style="left:1531px;top:148px;font-size:12px;line-height:12px;color:#000;transform:scaleX(0.89);transform-origin:0 0;">Sht-1 [Sheet Title]</div>
<div style="left:1489px;top:164px;width:367px;height:1px;background:#a0a0a0"></div>
<div style="left:1489px;top:165px;width:68px;height:54px;background:#efefef"></div>
<div style="left:1493px;top:167px;width:27px;height:20px;background:#a9cdec;border:1px solid #1e70d0"></div>
<svg style="position:absolute;left:1494px;top:168px" width="25" height="18" viewBox="0 0 25 18"><path d="M12.5 1L24.5 9L12.5 17L0.5 9Z" fill="#48cce6" stroke="#2ab4d4" stroke-width="1"/><path d="M12.5 2.6L16.6 5.4L12.5 8.2L8.4 5.4Z M18.4 6.4L22.2 9L18.4 11.6L14.6 9Z M12.5 9.8L16.6 12.6L12.5 15.4L8.4 12.6Z M6.6 6.4L10.4 9L6.6 11.6L2.8 9Z" fill="#f8ffff"/></svg>
<svg style="position:absolute;left:1496px;top:190px" width="19" height="22" viewBox="0 0 19 22"><path d="M1.5 1.5H16.5L15 19.5L2.5 15Z" fill="#f0a8f0" stroke="#d890d8" stroke-width="1"/><path d="M3 3H8V8H3Z M10 3H15V8H10Z M3 10H8V14H3Z M10 10H14.5V17H10Z" fill="#fff0ff"/><circle cx="8.5" cy="9.5" r="1.3" fill="#e02020"/></svg>
<div class="t" style="left:1533px;top:167px;font-size:12px;line-height:12px;color:#000;transform:scaleX(0.89);transform-origin:0 0;">X:</div>
<div class="t" style="left:1533px;top:186px;font-size:12px;line-height:12px;color:#000;transform:scaleX(0.89);transform-origin:0 0;">Y:</div>
<div class="t" style="left:1533px;top:205px;font-size:12px;line-height:12px;color:#000;transform:scaleX(0.89);transform-origin:0 0;">Z:</div>
<div style="left:1557px;top:165px;width:296px;height:17px;background:#fff;border:1px solid #9a9a9a"></div>
<div class="t" style="left:1561px;top:167px;font-size:12px;line-height:12px;color:#000;transform:scaleX(0.89);transform-origin:0 0;">0</div>
<div style="left:1557px;top:184px;width:296px;height:17px;background:#fff;border:1px solid #9a9a9a"></div>
<div class="t" style="left:1561px;top:186px;font-size:12px;line-height:12px;color:#000;transform:scaleX(0.89);transform-origin:0 0;">0</div>
<div style="left:1557px;top:203px;width:296px;height:16px;background:#fff;border:1px solid #9a9a9a"></div>
<div class="t" style="left:1561px;top:204px;font-size:12px;line-height:12px;color:#000;transform:scaleX(0.89);transform-origin:0 0;">0</div>
<div class="t" style="left:1493px;top:224px;font-size:12px;line-height:12px;color:#000;transform:scaleX(0.89);transform-origin:0 0;">Rotation:</div>
<div style="left:1614px;top:222px;width:239px;height:16px;background:#fff;border:1px solid #9a9a9a"></div>
<div class="t" style="left:1618px;top:223px;font-size:12px;line-height:12px;color:#000;transform:scaleX(0.89);transform-origin:0 0;">0.00°</div>
<div class="t" style="left:1493px;top:243px;font-size:12px;line-height:12px;color:#000;transform:scaleX(0.89);transform-origin:0 0;">Style:</div>
<div style="left:1614px;top:241px;width:239px;height:17px;background:#fff;border-left:1px solid #a0a0a0;border-top:1px solid #a0a0a0;border-right:1px solid #e2e2e2;border-bottom:1px solid #e2e2e2"></div>
<div style="left:1832px;top:243px;width:19px;height:13px;background:#f0f0f0"></div>
<svg style="position:absolute;left:1838px;top:248px" width="7" height="4" viewBox="0 0 7 4"><path d="M0 0H7L3.5 4Z" fill="#000"/></svg>
<div class="t" style="left:1618px;top:243px;font-size:12px;line-height:12px;color:#000;transform:scaleX(0.89);transform-origin:0 0;">Unstyled</div>
<div style="left:1491px;top:261px;width:13px;height:13px;background:#f8f8f8;border:1px solid #c4c4c4;border-radius:3px"></div>
<div class="t" style="left:1510px;top:262px;font-size:12px;line-height:12px;color:#9d9d9d;transform:scaleX(0.89);transform-origin:0 0;">Hide style parameters</div>
<div style="left:1490px;top:278px;width:363px;height:18px;background:#e0eef9;border:1px solid #0078d7;border-radius:4px"></div>
<div class="t" style="left:1271px;width:800px;text-align:center;top:282px;font-size:12px;line-height:12px;color:#000;transform:scaleX(0.89);transform-origin:50% 0;">Title Block Border Settings...</div>
<div style="left:1490px;top:298px;width:363px;height:16px;background:linear-gradient(90deg,#f3f3f3,#fdfdfd 4%,#fdfdfd);border:1px solid #cbcbcb;border-bottom-color:#a8a8a8;border-radius:4px"></div>
<div class="t" style="left:1271px;width:800px;text-align:center;top:300px;font-size:12px;line-height:12px;color:#000;transform:scaleX(0.89);transform-origin:50% 0;">Edit Title Block Layout...</div>
<div style="left:1491px;top:318px;width:13px;height:13px;background:#0067c0;border-radius:3px"></div>
<svg style="position:absolute;left:1491px;top:318px" width="13" height="13" viewBox="0 0 13 13"><path d="M3.2 6.6L5.4 8.8L9.8 4.2" fill="none" stroke="#fff" stroke-width="1.1"/></svg>
<div class="t" style="left:1510px;top:319px;font-size:12px;line-height:12px;color:#000;transform:scaleX(0.89);transform-origin:0 0;">Activate title block</div>
<div style="left:1491px;top:337px;width:13px;height:13px;background:#0067c0;border-radius:3px"></div>
<svg style="position:absolute;left:1491px;top:337px" width="13" height="13" viewBox="0 0 13 13"><path d="M3.2 6.6L5.4 8.8L9.8 4.2" fill="none" stroke="#fff" stroke-width="1.1"/></svg>
<div class="t" style="left:1510px;top:338px;font-size:12px;line-height:12px;color:#000;transform:scaleX(0.89);transform-origin:0 0;">Use Automatic Drawing Coordination</div>
<div class="t" style="left:1493px;top:357px;font-size:12px;line-height:12px;color:#000;transform:scaleX(0.89);transform-origin:0 0;">Sheet Size:</div>
<div style="left:1614px;top:354px;width:239px;height:18px;background:#fff;border-left:1px solid #a0a0a0;border-top:1px solid #a0a0a0;border-right:1px solid #e2e2e2;border-bottom:1px solid #e2e2e2"></div>
<div style="left:1832px;top:356px;width:19px;height:14px;background:#f0f0f0"></div>
<svg style="position:absolute;left:1838px;top:362px" width="7" height="4" viewBox="0 0 7 4"><path d="M0 0H7L3.5 4Z" fill="#000"/></svg>
<div class="t" style="left:1618px;top:357px;font-size:12px;line-height:12px;color:#000;transform:scaleX(0.89);transform-origin:0 0;">Fit to Printable Area</div>
<div class="t" style="left:1493px;top:376px;font-size:12px;line-height:12px;color:#9d9d9d;transform:scaleX(0.89);transform-origin:0 0;">Orientation:</div>
<div style="left:1614px;top:373px;width:239px;height:18px;background:#f3f3f3;border-left:1px solid #b9b9b9;border-top:1px solid #b9b9b9;border-right:1px solid #e2e2e2;border-bottom:1px solid #e2e2e2"></div>
<div style="left:1832px;top:375px;width:19px;height:14px;background:#f0f0f0"></div>
<svg style="position:absolute;left:1838px;top:381px" width="7" height="4" viewBox="0 0 7 4"><path d="M0 0H7L3.5 4Z" fill="#b0b0b0"/></svg>
<div class="t" style="left:1618px;top:376px;font-size:12px;line-height:12px;color:#9a9a9a;transform:scaleX(0.89);transform-origin:0 0;">Landscape</div>
<div class="t" style="left:1493px;top:395px;font-size:12px;line-height:12px;color:#000;transform:scaleX(0.89);transform-origin:0 0;">Horizontal Dimension:</div>
<div class="t" style="left:1618px;top:395px;font-size:12px;line-height:12px;color:#000;transform:scaleX(0.89);transform-origin:0 0;">42cm</div>
<div class="t" style="left:1493px;top:414px;font-size:12px;line-height:12px;color:#000;transform:scaleX(0.89);transform-origin:0 0;">Vertical Dimension:</div>
<div class="t" style="left:1618px;top:414px;font-size:12px;line-height:12px;color:#000;transform:scaleX(0.89);transform-origin:0 0;">29.7cm</div>
<div class="t" style="left:1493px;top:433px;font-size:12px;line-height:12px;color:#000;transform:scaleX(0.89);transform-origin:0 0;">Title Block Scale Factor:</div>
<div style="left:1614px;top:430px;width:239px;height:17px;background:#fff;border:1px solid #9a9a9a"></div>
<div class="t" style="left:1618px;top:432px;font-size:12px;line-height:12px;color:#000;transform:scaleX(0.89);transform-origin:0 0;">1</div>
<div style="left:1491px;top:451px;width:13px;height:13px;background:#f8f8f8;border:1px solid #3a3a3a;border-radius:3px"></div>
<div class="t" style="left:1510px;top:452px;font-size:12px;line-height:12px;color:#000;transform:scaleX(0.89);transform-origin:0 0;">Display North Point</div>
<div style="left:1490px;top:468px;width:363px;height:17px;background:linear-gradient(90deg,#f3f3f3,#fdfdfd 4%,#fdfdfd);border:1px solid #cbcbcb;border-bottom-color:#a8a8a8;border-radius:4px"></div>
<div class="t" style="left:1271px;width:800px;text-align:center;top:471px;font-size:12px;line-height:12px;color:#000;transform:scaleX(0.89);transform-origin:50% 0;">Sheet Data...</div>
<div style="left:1490px;top:487px;width:363px;height:17px;background:linear-gradient(90deg,#f3f3f3,#fdfdfd 4%,#fdfdfd);border:1px solid #cbcbcb;border-bottom-color:#a8a8a8;border-radius:4px"></div>
<div class="t" style="left:1271px;width:800px;text-align:center;top:490px;font-size:12px;line-height:12px;color:#000;transform:scaleX(0.89);transform-origin:50% 0;">Project Data...</div>
<div style="left:1490px;top:506px;width:363px;height:17px;background:linear-gradient(90deg,#f3f3f3,#fdfdfd 4%,#fdfdfd);border:1px solid #cbcbcb;border-bottom-color:#a8a8a8;border-radius:4px"></div>
<div class="t" style="left:1271px;width:800px;text-align:center;top:509px;font-size:12px;line-height:12px;color:#000;transform:scaleX(0.89);transform-origin:50% 0;">Drawing Stamp...</div>
<div style="left:1490px;top:525px;width:363px;height:17px;background:#f4f4f4;border:1px solid #e3e3e3;border-radius:4px"></div>
<div class="t" style="left:1271px;width:800px;text-align:center;top:528px;font-size:12px;line-height:12px;color:#9d9d9d;transform:scaleX(0.89);transform-origin:50% 0;">Refresh Plot Date</div>
<div style="left:1490px;top:544px;width:363px;height:17px;background:linear-gradient(90deg,#f3f3f3,#fdfdfd 4%,#fdfdfd);border:1px solid #cbcbcb;border-bottom-color:#a8a8a8;border-radius:4px"></div>
<div class="t" style="left:1271px;width:800px;text-align:center;top:547px;font-size:12px;line-height:12px;color:#000;transform:scaleX(0.89);transform-origin:50% 0;">Title Block Manager...</div>
<div style="left:478px;top:142px;width:995px;height:764px;background:#f0f0f0;border:1px solid #a8a8a8;border-radius:7px;box-shadow:0 16px 38px rgba(0,0,0,.31),0 1px 3px rgba(0,0,0,.06)"></div>
<div style="left:479px;top:143px;width:993px;height:29px;border-radius:6px 6px 0 0;background:linear-gradient(90deg,#eff4d9 0%,#eff5dd 38%,#e7f4ea 58%,#e3f3f2 72%,#eaf2f8 86%,#edf2fb 100%)"></div>
<div class="t" style="left:488px;top:151px;font-size:12px;line-height:12px;color:#1a1a1a;transform:scaleX(0.98);transform-origin:0 0;">Title Block Border Settings</div>
<div class="t" style="left:1401px;top:151px;font-size:12px;line-height:12px;color:#1a1a1a;transform:scaleX(1.0);transform-origin:0 0;">?</div>
<svg style="position:absolute;left:1443px;top:151px" width="11" height="11" viewBox="0 0 11 11"><path d="M0.5 0.5L10.5 10.5M10.5 0.5L0.5 10.5" stroke="#222" stroke-width="1.2"/></svg>
<div class="t" style="left:497px;top:189px;font-size:12px;line-height:12px;color:#000;transform:scaleX(0.89);transform-origin:0 0;">Use Style:</div>
<div style="left:551px;top:185px;width:180px;height:20px;background:#fff;border:1px solid #7a7a7a;border-radius:3px"></div>
<div class="t" style="left:557px;top:189px;font-size:12px;line-height:12px;color:#000;transform:scaleX(0.89);transform-origin:0 0;">Unstyled</div>
<svg style="position:absolute;left:718px;top:193px" width="9" height="5" viewBox="0 0 9 5"><path d="M0.5 0.5L4.5 4.5L8.5 0.5" fill="none" stroke="#333" stroke-width="1"/></svg>
<div style="left:747px;top:185px;width:118px;height:20px;background:#fdfdfd;border:1px solid #cfcfcf;border-radius:4px"></div>
<div class="t" style="left:756px;top:189px;font-size:12px;line-height:12px;color:#000;transform:scaleX(0.92);transform-origin:0 0;">Convert To Unstyled</div>
<div style="left:491px;top:231px;width:126px;height:569px;background:#fff;border:1px solid #7f7f7f"></div>
<div style="left:493px;top:233px;width:122px;height:16px;background:#0078d7"></div>
<div class="t" style="left:496px;top:234px;font-size:12px;line-height:12px;color:#fff;transform:scaleX(0.89);transform-origin:0 0;">Sheet Border</div>
<div class="t" style="left:496px;top:250px;font-size:12px;line-height:12px;color:#000;transform:scaleX(0.89);transform-origin:0 0;">Sheet Zones/Grids</div>
<div class="t" style="left:496px;top:266px;font-size:12px;line-height:12px;color:#000;transform:scaleX(0.89);transform-origin:0 0;">Title Block</div>
<div class="t" style="left:496px;top:282px;font-size:12px;line-height:12px;color:#000;transform:scaleX(0.89);transform-origin:0 0;">Project Data</div>
<div class="t" style="left:496px;top:298px;font-size:12px;line-height:12px;color:#000;transform:scaleX(0.89);transform-origin:0 0;">Sheet Data</div>
<div class="t" style="left:496px;top:314px;font-size:12px;line-height:12px;color:#000;transform:scaleX(0.89);transform-origin:0 0;">Revision Data</div>
<div class="t" style="left:496px;top:330px;font-size:12px;line-height:12px;color:#000;transform:scaleX(0.89);transform-origin:0 0;">Issue Data</div>
<div class="t" style="left:496px;top:346px;font-size:12px;line-height:12px;color:#000;transform:scaleX(0.89);transform-origin:0 0;">North Point</div>
<div class="t" style="left:496px;top:362px;font-size:12px;line-height:12px;color:#000;transform:scaleX(0.89);transform-origin:0 0;">Drawing Stamp</div>
<div class="t" style="left:496px;top:378px;font-size:12px;line-height:12px;color:#000;transform:scaleX(0.89);transform-origin:0 0;">Document Options</div>
<div style="left:638px;top:233px;width:494px;height:559px;border:1px solid #a9a9a9"></div>
<div style="left:645px;top:226px;width:67px;height:14px;background:#f0f0f0"></div>
<div class="t" style="left:647px;top:229px;font-size:12px;line-height:12px;color:#000;transform:scaleX(0.89);transform-origin:0 0;">Sheet Border</div>
<div class="t" style="left:650px;top:248px;font-size:12px;line-height:12px;color:#000;transform:scaleX(0.89);transform-origin:0 0;">Drawing Size</div>
<div class="t" style="left:650px;top:446px;font-size:12px;line-height:12px;color:#000;transform:scaleX(0.89);transform-origin:0 0;">Margins</div>
<div class="t" style="left:650px;top:586px;font-size:12px;line-height:12px;color:#000;transform:scaleX(0.89);transform-origin:0 0;">Border</div>
<div style="left:657px;top:266px;width:27px;height:21px;background:#f9f9f9;border:1px solid #e6e6e6;border-radius:4px"></div>
<svg style="position:absolute;left:661px;top:270px" width="20" height="13" viewBox="0 0 20 13"><rect x="1.5" y="2.2" width="17.5" height="2.6" rx="1.3" fill="#e4e4e4" stroke="#2a2a2a" stroke-width="0.95"/><rect x="1.5" y="8.2" width="17.5" height="2.6" rx="1.3" fill="#e4e4e4" stroke="#2a2a2a" stroke-width="0.95"/><rect x="11.6" y="1.2" width="3.4" height="4.6" rx="0.8" fill="#f4f4f4" stroke="#2a2a2a" stroke-width="0.95"/><rect x="5.6" y="7.2" width="3.4" height="4.6" rx="0.8" fill="#f4f4f4" stroke="#2a2a2a" stroke-width="0.95"/></svg>
<div style="left:657px;top:295px;width:27px;height:21px;background:#f9f9f9;border:1px solid #e6e6e6;border-radius:4px"></div>
<svg style="position:absolute;left:661px;top:299px" width="20" height="13" viewBox="0 0 20 13"><rect x="1.5" y="2.2" width="17.5" height="2.6" rx="1.3" fill="#e4e4e4" stroke="#2a2a2a" stroke-width="0.95"/><rect x="1.5" y="8.2" width="17.5" height="2.6" rx="1.3" fill="#e4e4e4" stroke="#2a2a2a" stroke-width="0.95"/><rect x="11.6" y="1.2" width="3.4" height="4.6" rx="0.8" fill="#f4f4f4" stroke="#2a2a2a" stroke-width="0.95"/><rect x="5.6" y="7.2" width="3.4" height="4.6" rx="0.8" fill="#f4f4f4" stroke="#2a2a2a" stroke-width="0.95"/></svg>
<div style="left:657px;top:324px;width:27px;height:21px;background:#f9f9f9;border:1px solid #e6e6e6;border-radius:4px"></div>
<svg style="position:absolute;left:661px;top:328px" width="20" height="13" viewBox="0 0 20 13"><rect x="1.5" y="2.2" width="17.5" height="2.6" rx="1.3" fill="#e4e4e4" stroke="#2a2a2a" stroke-width="0.95"/><rect x="1.5" y="8.2" width="17.5" height="2.6" rx="1.3" fill="#e4e4e4" stroke="#2a2a2a" stroke-width="0.95"/><rect x="11.6" y="1.2" width="3.4" height="4.6" rx="0.8" fill="#f4f4f4" stroke="#2a2a2a" stroke-width="0.95"/><rect x="5.6" y="7.2" width="3.4" height="4.6" rx="0.8" fill="#f4f4f4" stroke="#2a2a2a" stroke-width="0.95"/></svg>
<div style="left:657px;top:353px;width:27px;height:21px;background:#f9f9f9;border:1px solid #e6e6e6;border-radius:4px"></div>
<svg style="position:absolute;left:661px;top:357px" width="20" height="13" viewBox="0 0 20 13"><rect x="1.5" y="2.2" width="17.5" height="2.6" rx="1.3" fill="#e4e4e4" stroke="#2a2a2a" stroke-width="0.95"/><rect x="1.5" y="8.2" width="17.5" height="2.6" rx="1.3" fill="#e4e4e4" stroke="#2a2a2a" stroke-width="0.95"/><rect x="11.6" y="1.2" width="3.4" height="4.6" rx="0.8" fill="#f4f4f4" stroke="#2a2a2a" stroke-width="0.95"/><rect x="5.6" y="7.2" width="3.4" height="4.6" rx="0.8" fill="#f4f4f4" stroke="#2a2a2a" stroke-width="0.95"/></svg>
<div style="left:657px;top:382px;width:27px;height:21px;background:#f9f9f9;border:1px solid #e6e6e6;border-radius:4px"></div>
<svg style="position:absolute;left:661px;top:386px" width="20" height="13" viewBox="0 0 20 13"><rect x="1.5" y="2.2" width="17.5" height="2.6" rx="1.3" fill="#e4e4e4" stroke="#2a2a2a" stroke-width="0.95"/><rect x="1.5" y="8.2" width="17.5" height="2.6" rx="1.3" fill="#e4e4e4" stroke="#2a2a2a" stroke-width="0.95"/><rect x="11.6" y="1.2" width="3.4" height="4.6" rx="0.8" fill="#f4f4f4" stroke="#2a2a2a" stroke-width="0.95"/><rect x="5.6" y="7.2" width="3.4" height="4.6" rx="0.8" fill="#f4f4f4" stroke="#2a2a2a" stroke-width="0.95"/></svg>
<div style="left:657px;top:412px;width:27px;height:21px;background:#f9f9f9;border:1px solid #e6e6e6;border-radius:4px"></div>
<svg style="position:absolute;left:661px;top:416px" width="20" height="13" viewBox="0 0 20 13"><rect x="1.5" y="2.2" width="17.5" height="2.6" rx="1.3" fill="#e4e4e4" stroke="#2a2a2a" stroke-width="0.95"/><rect x="1.5" y="8.2" width="17.5" height="2.6" rx="1.3" fill="#e4e4e4" stroke="#2a2a2a" stroke-width="0.95"/><rect x="11.6" y="1.2" width="3.4" height="4.6" rx="0.8" fill="#f4f4f4" stroke="#2a2a2a" stroke-width="0.95"/><rect x="5.6" y="7.2" width="3.4" height="4.6" rx="0.8" fill="#f4f4f4" stroke="#2a2a2a" stroke-width="0.95"/></svg>
<div style="left:657px;top:464px;width:27px;height:21px;background:#f9f9f9;border:1px solid #e6e6e6;border-radius:4px"></div>
<svg style="position:absolute;left:661px;top:468px" width="20" height="13" viewBox="0 0 20 13"><rect x="1.5" y="2.2" width="17.5" height="2.6" rx="1.3" fill="#e4e4e4" stroke="#2a2a2a" stroke-width="0.95"/><rect x="1.5" y="8.2" width="17.5" height="2.6" rx="1.3" fill="#e4e4e4" stroke="#2a2a2a" stroke-width="0.95"/><rect x="11.6" y="1.2" width="3.4" height="4.6" rx="0.8" fill="#f4f4f4" stroke="#2a2a2a" stroke-width="0.95"/><rect x="5.6" y="7.2" width="3.4" height="4.6" rx="0.8" fill="#f4f4f4" stroke="#2a2a2a" stroke-width="0.95"/></svg>
<div style="left:657px;top:492px;width:27px;height:21px;background:#f9f9f9;border:1px solid #e6e6e6;border-radius:4px"></div>
<svg style="position:absolute;left:661px;top:496px" width="20" height="13" viewBox="0 0 20 13"><rect x="1.5" y="2.2" width="17.5" height="2.6" rx="1.3" fill="#e4e4e4" stroke="#2a2a2a" stroke-width="0.95"/><rect x="1.5" y="8.2" width="17.5" height="2.6" rx="1.3" fill="#e4e4e4" stroke="#2a2a2a" stroke-width="0.95"/><rect x="11.6" y="1.2" width="3.4" height="4.6" rx="0.8" fill="#f4f4f4" stroke="#2a2a2a" stroke-width="0.95"/><rect x="5.6" y="7.2" width="3.4" height="4.6" rx="0.8" fill="#f4f4f4" stroke="#2a2a2a" stroke-width="0.95"/></svg>
<div style="left:657px;top:522px;width:27px;height:21px;background:#f9f9f9;border:1px solid #e6e6e6;border-radius:4px"></div>
<svg style="position:absolute;left:661px;top:526px" width="20" height="13" viewBox="0 0 20 13"><rect x="1.5" y="2.2" width="17.5" height="2.6" rx="1.3" fill="#e4e4e4" stroke="#2a2a2a" stroke-width="0.95"/><rect x="1.5" y="8.2" width="17.5" height="2.6" rx="1.3" fill="#e4e4e4" stroke="#2a2a2a" stroke-width="0.95"/><rect x="11.6" y="1.2" width="3.4" height="4.6" rx="0.8" fill="#f4f4f4" stroke="#2a2a2a" stroke-width="0.95"/><rect x="5.6" y="7.2" width="3.4" height="4.6" rx="0.8" fill="#f4f4f4" stroke="#2a2a2a" stroke-width="0.95"/></svg>
<div style="left:657px;top:551px;width:27px;height:21px;background:#f9f9f9;border:1px solid #e6e6e6;border-radius:4px"></div>
<svg style="position:absolute;left:661px;top:555px" width="20" height="13" viewBox="0 0 20 13"><rect x="1.5" y="2.2" width="17.5" height="2.6" rx="1.3" fill="#e4e4e4" stroke="#2a2a2a" stroke-width="0.95"/><rect x="1.5" y="8.2" width="17.5" height="2.6" rx="1.3" fill="#e4e4e4" stroke="#2a2a2a" stroke-width="0.95"/><rect x="11.6" y="1.2" width="3.4" height="4.6" rx="0.8" fill="#f4f4f4" stroke="#2a2a2a" stroke-width="0.95"/><rect x="5.6" y="7.2" width="3.4" height="4.6" rx="0.8" fill="#f4f4f4" stroke="#2a2a2a" stroke-width="0.95"/></svg>
<div style="left:657px;top:604px;width:27px;height:21px;background:#f9f9f9;border:1px solid #e6e6e6;border-radius:4px"></div>
<svg style="position:absolute;left:661px;top:608px" width="20" height="13" viewBox="0 0 20 13"><rect x="1.5" y="2.2" width="17.5" height="2.6" rx="1.3" fill="#e4e4e4" stroke="#2a2a2a" stroke-width="0.95"/><rect x="1.5" y="8.2" width="17.5" height="2.6" rx="1.3" fill="#e4e4e4" stroke="#2a2a2a" stroke-width="0.95"/><rect x="11.6" y="1.2" width="3.4" height="4.6" rx="0.8" fill="#f4f4f4" stroke="#2a2a2a" stroke-width="0.95"/><rect x="5.6" y="7.2" width="3.4" height="4.6" rx="0.8" fill="#f4f4f4" stroke="#2a2a2a" stroke-width="0.95"/></svg>
<div style="left:657px;top:634px;width:27px;height:21px;background:#f9f9f9;border:1px solid #e6e6e6;border-radius:4px"></div>
<svg style="position:absolute;left:661px;top:638px" width="20" height="13" viewBox="0 0 20 13"><rect x="1.5" y="2.2" width="17.5" height="2.6" rx="1.3" fill="#e4e4e4" stroke="#2a2a2a" stroke-width="0.95"/><rect x="1.5" y="8.2" width="17.5" height="2.6" rx="1.3" fill="#e4e4e4" stroke="#2a2a2a" stroke-width="0.95"/><rect x="11.6" y="1.2" width="3.4" height="4.6" rx="0.8" fill="#f4f4f4" stroke="#2a2a2a" stroke-width="0.95"/><rect x="5.6" y="7.2" width="3.4" height="4.6" rx="0.8" fill="#f4f4f4" stroke="#2a2a2a" stroke-width="0.95"/></svg>
<div style="left:657px;top:662px;width:27px;height:21px;background:#f9f9f9;border:1px solid #e6e6e6;border-radius:4px"></div>
<svg style="position:absolute;left:661px;top:666px" width="20" height="13" viewBox="0 0 20 13"><rect x="1.5" y="2.2" width="17.5" height="2.6" rx="1.3" fill="#e4e4e4" stroke="#2a2a2a" stroke-width="0.95"/><rect x="1.5" y="8.2" width="17.5" height="2.6" rx="1.3" fill="#e4e4e4" stroke="#2a2a2a" stroke-width="0.95"/><rect x="11.6" y="1.2" width="3.4" height="4.6" rx="0.8" fill="#f4f4f4" stroke="#2a2a2a" stroke-width="0.95"/><rect x="5.6" y="7.2" width="3.4" height="4.6" rx="0.8" fill="#f4f4f4" stroke="#2a2a2a" stroke-width="0.95"/></svg>
<div style="left:657px;top:692px;width:27px;height:21px;background:#f9f9f9;border:1px solid #e6e6e6;border-radius:4px"></div>
<svg style="position:absolute;left:661px;top:696px" width="20" height="13" viewBox="0 0 20 13"><rect x="1.5" y="2.2" width="17.5" height="2.6" rx="1.3" fill="#e4e4e4" stroke="#2a2a2a" stroke-width="0.95"/><rect x="1.5" y="8.2" width="17.5" height="2.6" rx="1.3" fill="#e4e4e4" stroke="#2a2a2a" stroke-width="0.95"/><rect x="11.6" y="1.2" width="3.4" height="4.6" rx="0.8" fill="#f4f4f4" stroke="#2a2a2a" stroke-width="0.95"/><rect x="5.6" y="7.2" width="3.4" height="4.6" rx="0.8" fill="#f4f4f4" stroke="#2a2a2a" stroke-width="0.95"/></svg>
<div class="t" style="left:701px;top:271px;font-size:12px;line-height:12px;color:#000;transform:scaleX(0.89);transform-origin:0 0;">Sheet Size:</div>
<div style="left:805px;top:266px;width:317px;height:20px;background:#fff;border:1px solid #7a7a7a;border-radius:3px"></div>
<div class="t" style="left:809px;top:271px;font-size:12px;line-height:12px;color:#000;transform:scaleX(0.89);transform-origin:0 0;">Fit to Printable Area</div>
<svg style="position:absolute;left:1108px;top:274px" width="9" height="5" viewBox="0 0 9 5"><path d="M0.5 0.5L4.5 4.5L8.5 0.5" fill="none" stroke="#333" stroke-width="1"/></svg>
<div class="t" style="left:701px;top:300px;font-size:12px;line-height:12px;color:#a0a0a0;transform:scaleX(0.89);transform-origin:0 0;">Width:</div>
<div style="left:806px;top:297px;width:315px;height:18px;background:#f0f0f0;border:1px solid #dedede"></div>
<div class="t" style="left:808px;top:300px;font-size:12px;line-height:12px;color:#8d8d8d;transform:scaleX(0.89);transform-origin:0 0;">42</div>
<div class="t" style="left:701px;top:329px;font-size:12px;line-height:12px;color:#a0a0a0;transform:scaleX(0.89);transform-origin:0 0;">Height:</div>
<div style="left:806px;top:326px;width:315px;height:18px;background:#f0f0f0;border:1px solid #dedede"></div>
<div class="t" style="left:808px;top:329px;font-size:12px;line-height:12px;color:#8d8d8d;transform:scaleX(0.89);transform-origin:0 0;">29.7</div>
<div class="t" style="left:701px;top:358px;font-size:12px;line-height:12px;color:#a0a0a0;transform:scaleX(0.89);transform-origin:0 0;">Orientation:</div>
<div style="left:805px;top:354px;width:317px;height:20px;background:#f8f8f8;border:1px solid #d6d6d6;border-radius:3px"></div>
<div style="left:806px;top:356px;width:297px;height:16px;background:#efefef"></div>
<div class="t" style="left:809px;top:358px;font-size:12px;line-height:12px;color:#8d8d8d;transform:scaleX(0.89);transform-origin:0 0;">Landscape</div>
<svg style="position:absolute;left:1108px;top:362px" width="9" height="5" viewBox="0 0 9 5"><path d="M0.5 0.5L4.5 4.5L8.5 0.5" fill="none" stroke="#a8a8a8" stroke-width="1"/></svg>
<div class="t" style="left:701px;top:387px;font-size:12px;line-height:12px;color:#000;transform:scaleX(0.89);transform-origin:0 0;">Sheet Fit Mode:</div>
<div style="left:805px;top:383px;width:317px;height:21px;background:#fff;border:1px solid #7a7a7a;border-radius:3px"></div>
<div class="t" style="left:809px;top:387px;font-size:12px;line-height:12px;color:#000;transform:scaleX(0.89);transform-origin:0 0;">Outside Dimensions</div>
<svg style="position:absolute;left:1108px;top:391px" width="9" height="5" viewBox="0 0 9 5"><path d="M0.5 0.5L4.5 4.5L8.5 0.5" fill="none" stroke="#333" stroke-width="1"/></svg>
<div style="left:701px;top:417px;width:13px;height:13px;background:#0067c0;border-radius:3px"></div>
<svg style="position:absolute;left:701px;top:417px" width="13" height="13" viewBox="0 0 13 13"><path d="M3.3 6.8L5.5 8.9L9.7 4.5" fill="none" stroke="#e8f0ff" stroke-width="0.9"/></svg>
<div class="t" style="left:717px;top:418px;font-size:12px;line-height:12px;color:#000;transform:scaleX(0.89);transform-origin:0 0;">Lock to page center</div>
<div class="t" style="left:701px;top:469px;font-size:12px;line-height:12px;color:#000;transform:scaleX(0.89);transform-origin:0 0;">Left:</div>
<div style="left:806px;top:465px;width:316px;height:20px;background:#fff;border:1px solid #c8c8c8;border-bottom:1px solid #7a7a7a;border-radius:2px"></div>
<div class="t" style="left:808px;top:469px;font-size:12px;line-height:12px;color:#000;transform:scaleX(0.89);transform-origin:0 0;">0.5</div>
<div class="t" style="left:701px;top:498px;font-size:12px;line-height:12px;color:#000;transform:scaleX(0.89);transform-origin:0 0;">Right:</div>
<div style="left:806px;top:494px;width:316px;height:20px;background:#fff;border:1px solid #c8c8c8;border-bottom:1px solid #7a7a7a;border-radius:2px"></div>
<div class="t" style="left:808px;top:498px;font-size:12px;line-height:12px;color:#000;transform:scaleX(0.89);transform-origin:0 0;">0.5</div>
<div class="t" style="left:701px;top:527px;font-size:12px;line-height:12px;color:#000;transform:scaleX(0.89);transform-origin:0 0;">Top:</div>
<div style="left:806px;top:523px;width:316px;height:20px;background:#fff;border:1px solid #c8c8c8;border-bottom:1px solid #7a7a7a;border-radius:2px"></div>
<div class="t" style="left:808px;top:527px;font-size:12px;line-height:12px;color:#000;transform:scaleX(0.89);transform-origin:0 0;">0.5</div>
<div class="t" style="left:701px;top:557px;font-size:12px;line-height:12px;color:#000;transform:scaleX(0.89);transform-origin:0 0;">Bottom:</div>
<div style="left:806px;top:552px;width:316px;height:20px;background:#fff;border:1px solid #c8c8c8;border-bottom:1px solid #7a7a7a;border-radius:2px"></div>
<div class="t" style="left:808px;top:557px;font-size:12px;line-height:12px;color:#000;transform:scaleX(0.89);transform-origin:0 0;">0.5</div>
<div style="left:701px;top:609px;width:13px;height:13px;background:#f6f6f6;border:1px solid #333;border-radius:3px"></div>
<div class="t" style="left:717px;top:610px;font-size:12px;line-height:12px;color:#000;transform:scaleX(0.89);transform-origin:0 0;">Hide border</div>
<div style="left:701px;top:638px;width:13px;height:13px;background:#0067c0;border-radius:3px"></div>
<svg style="position:absolute;left:701px;top:638px" width="13" height="13" viewBox="0 0 13 13"><path d="M3.3 6.8L5.5 8.9L9.7 4.5" fill="none" stroke="#e8f0ff" stroke-width="0.9"/></svg>
<div class="t" style="left:717px;top:639px;font-size:12px;line-height:12px;color:#000;transform:scaleX(0.89);transform-origin:0 0;">Use line weight of object for border</div>
<div class="t" style="left:701px;top:667px;font-size:12px;line-height:12px;color:#a0a0a0;transform:scaleX(0.89);transform-origin:0 0;">Border Line Weight:</div>
<div style="left:805px;top:663px;width:317px;height:20px;background:#fafafa;border:1px solid #d6d6d6;border-radius:3px"></div>
<div style="left:806px;top:665px;width:297px;height:16px;background:#efefef"></div>
<div style="left:808px;top:675px;width:247px;height:1px;background:#c8c8c8"></div>
<div class="t" style="left:1056px;top:667px;font-size:12px;line-height:12px;color:#9a9a9a;transform:scaleX(0.89);transform-origin:0 0;">0.13</div>
<svg style="position:absolute;left:1108px;top:671px" width="9" height="5" viewBox="0 0 9 5"><path d="M0.5 0.5L4.5 4.5L8.5 0.5" fill="none" stroke="#a0a0a0" stroke-width="1"/></svg>
<div style="left:701px;top:696px;width:13px;height:13px;background:#0067c0;border-radius:3px"></div>
<svg style="position:absolute;left:701px;top:696px" width="13" height="13" viewBox="0 0 13 13"><path d="M3.3 6.8L5.5 8.9L9.7 4.5" fill="none" stroke="#e8f0ff" stroke-width="0.9"/></svg>
<div class="t" style="left:717px;top:697px;font-size:12px;line-height:12px;color:#000;transform:scaleX(0.89);transform-origin:0 0;">Fill border</div>
<div class="t" style="left:1160px;top:235px;font-size:12px;line-height:12px;color:#000;transform:scaleX(0.89);transform-origin:0 0;">Preview</div>
<div style="left:1204px;top:237px;width:254px;height:1px;background:#a0a0a0"></div>
<div style="left:1204px;top:238px;width:254px;height:1px;background:#fff"></div>
<div style="left:1160px;top:257px;width:300px;height:500px;background:#fff;border-left:1px solid #a0a0a0;border-top:1px solid #a0a0a0"></div>
<div style="left:1162px;top:403px;width:297px;height:210px;border:3px solid #ebebeb"></div>
<div style="left:1160px;top:768px;width:13px;height:13px;background:#f6f6f6;border:1px solid #333;border-radius:3px"></div>
<div class="t" style="left:1176px;top:769px;font-size:12px;line-height:12px;color:#000;transform:scaleX(0.89);transform-origin:0 0;">Zoom in on the title block</div>
<div style="left:491px;top:815px;width:968px;height:40px;border:1px solid #a0a0a0;box-shadow:inset 1px 1px 0 #fff"></div>
<div class="t" style="left:497px;top:823px;font-size:12px;line-height:12px;color:#000;transform:scaleX(0.89);transform-origin:0 0;">For Help, press F1 or click the ? icon.</div>
<div style="left:1296px;top:869px;width:74px;height:21px;background:#fdfdfd;border:1.5px solid #0067c0;border-radius:4px"></div>
<div class="t" style="left:933px;width:800px;text-align:center;top:874px;font-size:12px;line-height:12px;color:#000;transform:scaleX(0.87);transform-origin:50% 0;">OK</div>
<div style="left:1386px;top:869px;width:73px;height:21px;background:#fdfdfd;border:1px solid #cdcdcd;border-radius:4px"></div>
<div class="t" style="left:1022px;width:800px;text-align:center;top:874px;font-size:12px;line-height:12px;color:#000;transform:scaleX(0.87);transform-origin:50% 0;">Cancel</div>
<svg style="position:absolute;left:1461px;top:896px" width="8" height="8" viewBox="0 0 8 8"><rect x="6" y="0" width="2" height="2" fill="#a0a0a0"/><rect x="3" y="3" width="2" height="2" fill="#a0a0a0"/><rect x="6" y="3" width="2" height="2" fill="#a0a0a0"/><rect x="0" y="6" width="2" height="2" fill="#a0a0a0"/><rect x="3" y="6" width="2" height="2" fill="#a0a0a0"/><rect x="6" y="6" width="2" height="2" fill="#a0a0a0"/></svg></body></html>
